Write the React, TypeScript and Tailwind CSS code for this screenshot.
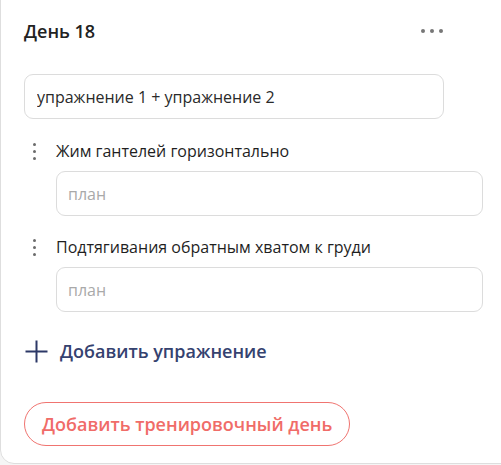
const exercises = ['Жим гантелей горизонтально', 'Подтягивания обратным хватом к груди']

function VDots() {
  return (
    <span className="flex w-[18px] flex-col items-center gap-[4px]">
      <span className="h-[3px] w-[3px] rounded-full bg-[#6b6b6b]" />
      <span className="h-[3px] w-[3px] rounded-full bg-[#6b6b6b]" />
      <span className="h-[3px] w-[3px] rounded-full bg-[#6b6b6b]" />
    </span>
  )
}

function ExerciseRow({ name }: { name: string }) {
  return (
    <div className="flex flex-col">
      <div className="flex h-[20px] items-center gap-[13px] pl-[24px]">
        <VDots />
        <span className="text-[16px] text-[#1f1f1f]">{name}</span>
      </div>
      <div className="mt-[10px] pl-[55px] pr-[56px]">
        <input
          placeholder="план"
          className="h-[45px] w-full rounded-[9px] border border-[#dcdcdc] bg-white px-[11px] text-[16px] text-[#333] placeholder:text-[#a9a9a9] outline-none"
        />
      </div>
    </div>
  )
}

export default function App() {
  return (
    <div className="h-[465px] w-[501px] overflow-hidden bg-[#f5f5f5] font-['Open_Sans',sans-serif]">
      <div className="-mt-[20px] flex h-[484px] w-[540px] flex-col rounded-[14px] border border-[#dedede] bg-white">
        <div className="mt-[37px] flex h-[26px] items-center justify-between pl-[23px] pr-[96px]">
          <h2 className="text-[18px] font-semibold text-[#222]">День 18</h2>
          <span className="flex gap-[5px]">
            <span className="h-[4px] w-[4px] rounded-full bg-[#777]" />
            <span className="h-[4px] w-[4px] rounded-full bg-[#777]" />
            <span className="h-[4px] w-[4px] rounded-full bg-[#777]" />
          </span>
        </div>

        <div className="mt-[30px] pl-[23px] pr-[95px]">
          <input
            defaultValue="упражнение 1 + упражнение 2"
            className="h-[45px] w-full rounded-[9px] border border-[#dcdcdc] bg-white px-[12px] text-[16px] text-[#2a2a2a] outline-none"
          />
        </div>

        <div className="mt-[22px] flex flex-col gap-[21px]">
          {exercises.map((e) => (
            <ExerciseRow key={e} name={e} />
          ))}
        </div>

        <button className="mt-[26px] ml-[24px] flex h-[26px] items-center gap-[12px] self-start text-[18px] font-semibold text-[#35426f]">
          <svg width="23" height="23" viewBox="0 0 23 23" fill="none" stroke="#2c3867" strokeWidth="2">
            <path d="M11.5 0.5v22M0.5 11.5h22" />
          </svg>
          Добавить упражнение
        </button>

        <button className="mt-[38px] ml-[23px] h-[44px] self-start rounded-full border border-[#f07470] px-[17px] text-[18px] font-semibold text-[#f06c68]">
          Добавить тренировочный день
        </button>
      </div>
    </div>
  )
}
